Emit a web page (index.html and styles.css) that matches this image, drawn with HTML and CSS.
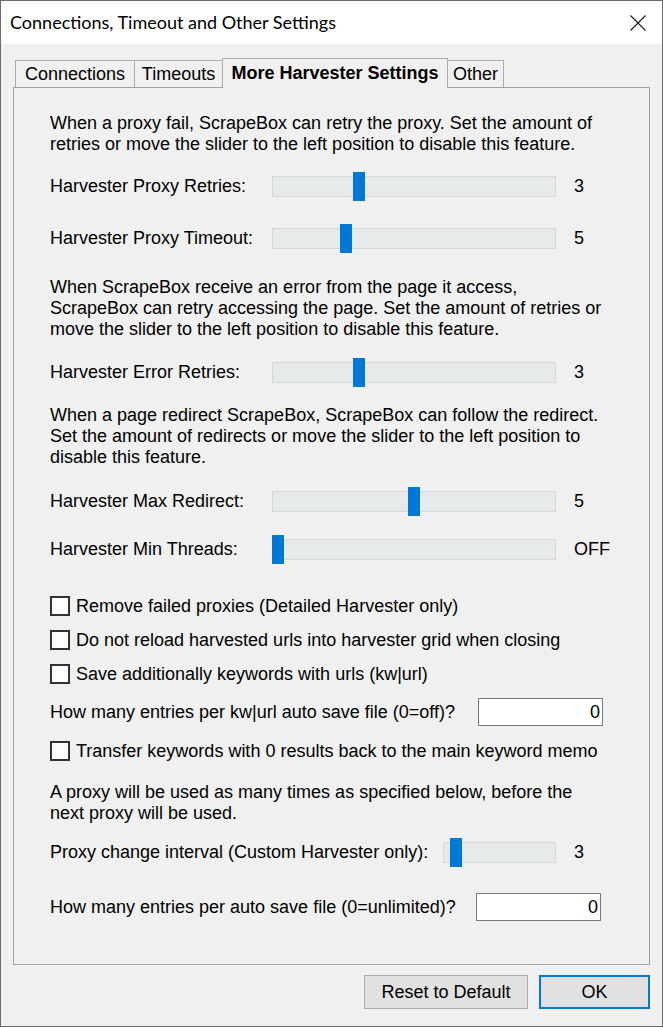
FILE: index.html
```html
<!DOCTYPE html>
<html lang="en">
<head>
    <meta charset="UTF-8">
    <meta name="viewport" content="width=device-width, initial-scale=1.0">
    <title>Connections, Timeout and Other Settings</title>
    <link rel="stylesheet" href="styles.css">
</head>
<body>
    <div class="window">
        <div class="titlebar">
            <span class="title">Connections, Timeout and Other Settings</span>
            <button class="close" title="Close">
                <svg width="16" height="16" viewBox="0 0 16 16">
                    <path d="M0.5 0.5 L15.5 15.5 M15.5 0.5 L0.5 15.5" stroke="#1a1a1a" stroke-width="1.1" fill="none"/>
                </svg>
            </button>
        </div>

        <div class="client">
            <div class="tabs">
                <div class="tab tab-connections">Connections</div>
                <div class="tab tab-timeouts">Timeouts</div>
                <div class="tab tab-harvester active">More Harvester Settings</div>
                <div class="tab tab-other">Other</div>
            </div>

            <div class="panel">
                <p class="note note-1">When a proxy fail, ScrapeBox can retry the proxy. Set the amount of<br>retries or move the slider to the left position to disable this feature.</p>

                <div class="slider-row row-retries">
                    <span class="label">Harvester Proxy Retries:</span>
                    <div class="track"><div class="thumb" style="left: 80px"></div></div>
                    <span class="value">3</span>
                </div>

                <div class="slider-row row-timeout">
                    <span class="label">Harvester Proxy Timeout:</span>
                    <div class="track"><div class="thumb" style="left: 67px"></div></div>
                    <span class="value">5</span>
                </div>

                <p class="note note-2">When ScrapeBox receive an error from the page it access,<br>ScrapeBox can retry accessing the page. Set the amount of retries or<br>move the slider to the left position to disable this feature.</p>

                <div class="slider-row row-errors">
                    <span class="label">Harvester Error Retries:</span>
                    <div class="track"><div class="thumb" style="left: 80px"></div></div>
                    <span class="value">3</span>
                </div>

                <p class="note note-3">When a page redirect ScrapeBox, ScrapeBox can follow the redirect.<br>Set the amount of redirects or move the slider to the left position to<br>disable this feature.</p>

                <div class="slider-row row-redirect">
                    <span class="label">Harvester Max Redirect:</span>
                    <div class="track"><div class="thumb" style="left: 135px"></div></div>
                    <span class="value">5</span>
                </div>

                <div class="slider-row row-threads">
                    <span class="label">Harvester Min Threads:</span>
                    <div class="track"><div class="thumb" style="left: -1px"></div></div>
                    <span class="value">OFF</span>
                </div>

                <label class="check row-failed"><span class="box"></span>Remove failed proxies (Detailed Harvester only)</label>
                <label class="check row-reload"><span class="box"></span>Do not reload harvested urls into harvester grid when closing</label>
                <label class="check row-kwurl"><span class="box"></span>Save additionally keywords with urls (kw|url)</label>

                <div class="input-row row-kwfile">
                    <span class="label">How many entries per kw|url auto save file (0=off)?</span>
                    <input class="num" type="text" value="0">
                </div>

                <label class="check row-transfer"><span class="box"></span>Transfer keywords with 0 results back to the main keyword memo</label>

                <p class="note note-4">A proxy will be used as many times as specified below, before the<br>next proxy will be used.</p>

                <div class="slider-row row-interval">
                    <span class="label">Proxy change interval (Custom Harvester only):</span>
                    <div class="track short"><div class="thumb" style="left: 6px"></div></div>
                    <span class="value">3</span>
                </div>

                <div class="input-row row-autosave">
                    <span class="label">How many entries per auto save file (0=unlimited)?</span>
                    <input class="num" type="text" value="0">
                </div>
            </div>

            <div class="footer">
                <button class="btn btn-reset">Reset to Default</button>
                <button class="btn btn-ok">OK</button>
            </div>
        </div>
    </div>
</body>
</html>
```

FILE: styles.css
```css
* {
    margin: 0;
    padding: 0;
    box-sizing: border-box;
}

body {
    background: #f0f0f0;
    font-family: 'Liberation Sans', Arial, sans-serif;
    font-size: 18px;
    color: #000;
}

.window {
    width: 663px;
    height: 1027px;
    border: 1px solid #6b6b6b;
    background: #f0f0f0;
    display: flex;
    flex-direction: column;
}

/* title bar */
.titlebar {
    height: 43px;
    background: #fff;
    display: flex;
    align-items: center;
    justify-content: space-between;
    padding-left: 9px;
}

.title {
    font-family: 'Lato', 'Liberation Sans', sans-serif;
    font-size: 18px;
    color: #000;
    margin-top: -1px;
}

.close {
    width: 46px;
    height: 43px;
    border: none;
    background: transparent;
    display: flex;
    align-items: center;
    justify-content: center;
    padding-top: 1px;
    margin-right: 1px;
}

/* client area */
.client {
    flex: 1;
    padding: 14px 12px 0 11px;
}

.tabs {
    display: flex;
    align-items: flex-end;
    height: 29px;
    margin-left: 3px;
    position: relative;
    z-index: 1;
}

.tab {
    height: 27px;
    border: 1px solid #adadad;
    border-bottom: none;
    background: #f0f0f0;
    font-size: 18px;
    line-height: 27px;
    text-align: center;
    white-space: nowrap;
    margin-right: -1px;
}

.tab-connections { width: 120px; }
.tab-timeouts { width: 89px; }
.tab-other { width: 57px; }

.tab.active {
    width: 226px;
    height: 30px;
    margin-bottom: -1px;
    font-weight: bold;
    line-height: 28px;
    padding-bottom: 2px;
}

.panel {
    height: 878px;
    margin-left: 1px;
    border: 1px solid #a0a0a0;
    padding: 25px 15px 0 36px;
}

.note {
    line-height: 21px;
}

.note-1 { margin-top: 0; }
.note-2 { margin-top: 24px; }
.note-3 { margin-top: 18px; }
.note-4 { margin-top: 19px; }

/* sliders */
.slider-row {
    display: flex;
    align-items: center;
    height: 30px;
}

.slider-row .label {
    flex: 1;
}

.track {
    position: relative;
    width: 284px;
    height: 21px;
    background: #e7eaea;
    border: 1px solid #d6d6d6;
}

.track.short {
    width: 113px;
}

.thumb {
    position: absolute;
    top: -5px;
    width: 12px;
    height: 29px;
    background: #0078d7;
}

.slider-row .value {
    width: 60px;
    margin-left: 18px;
}

.row-retries { margin-top: 16px; }
.row-timeout { margin-top: 22px; }
.row-errors { margin-top: 17px; }
.row-redirect { margin-top: 18px; }
.row-threads { margin-top: 18px; }
.row-interval { margin-top: 13px; }

/* checkboxes */
.check {
    display: flex;
    align-items: center;
    height: 24px;
}

.check .box {
    width: 20px;
    height: 20px;
    border: 2px solid #333;
    background: #fff;
    margin-right: 6px;
}

.row-failed { margin-top: 30px; }
.row-reload { margin-top: 10px; }
.row-kwurl { margin-top: 10px; }
.row-transfer { margin-top: 13px; }

/* number inputs */
.input-row {
    display: flex;
    align-items: center;
    height: 28px;
}

.input-row .label {
    flex: 1;
}

.num {
    width: 125px;
    height: 28px;
    border: 1px solid #7a7a7a;
    background: #fff;
    font-family: inherit;
    font-size: 18px;
    text-align: right;
    padding-right: 2px;
}

.row-kwfile { margin-top: 12px; }
.row-kwfile .num { margin-right: 31px; }
.row-autosave { margin-top: 26px; }
.row-autosave .num { margin-right: 33px; }

/* dialog buttons */
.footer {
    display: flex;
    justify-content: flex-end;
    gap: 11px;
    margin-top: 10px;
}

.btn {
    height: 34px;
    border: 1px solid #adadad;
    background: #e1e1e1;
    font-family: inherit;
    font-size: 18px;
    color: #000;
}

.btn-reset { width: 164px; }

.btn-ok {
    width: 111px;
    border: 2px solid #0078d7;
}
```
